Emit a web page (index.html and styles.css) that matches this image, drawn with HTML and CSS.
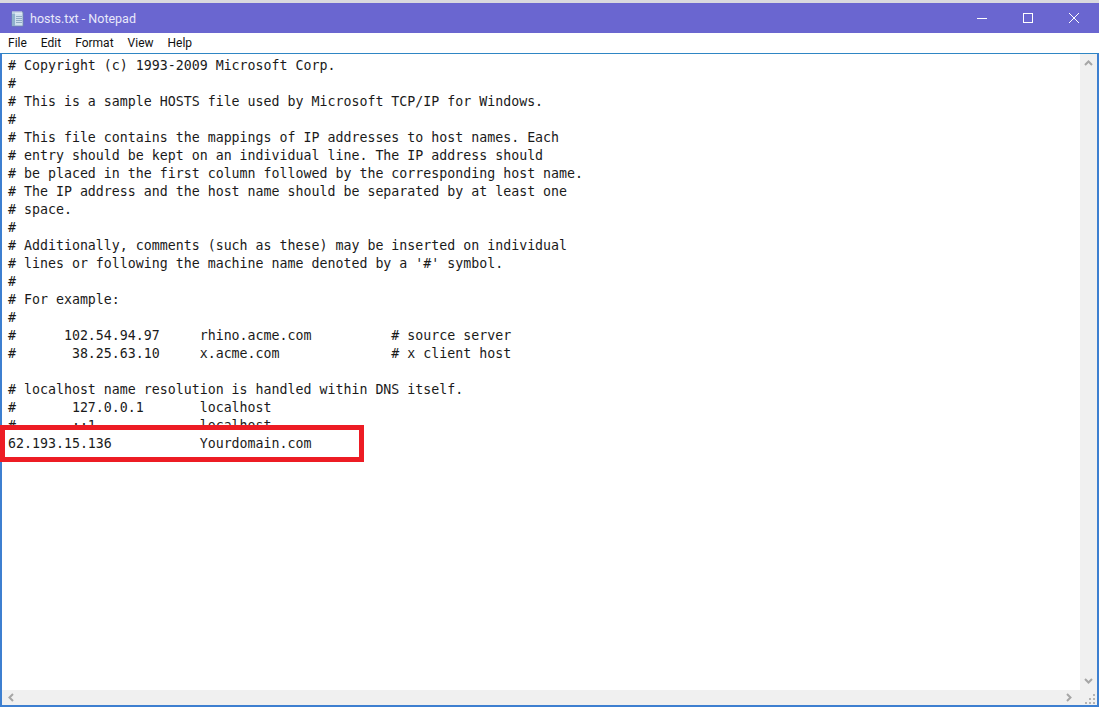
FILE: index.html
```html
<!DOCTYPE html>
<html lang="en">
<head>
<meta charset="utf-8">
<title>hosts.txt - Notepad</title>
<link rel="stylesheet" href="styles.css">
</head>
<body>
<div class="window">
  <header class="titlebar">
    <svg class="app-icon" width="16" height="17" viewBox="0 0 16 17">
      <path d="M3 2h11v14H3z" fill="#cfe0ee" stroke="#6f8ca8" stroke-width=".8"/>
      <path d="M3 2h3v14H3z" fill="#8fb2cc"/>
      <path d="M4 1v3M6 1v3M8 1v3M10 1v3M12 1v3" stroke="#f2f6fa" stroke-width=".9"/>
      <path d="M7 6.500h6M7 8.500h6M7 10.500h6M7 12.500h6" stroke="#7f9db9" stroke-width=".8"/>
    </svg>
    <span class="title">hosts.txt - Notepad</span>
    <div class="controls">
      <span class="ctl"><svg width="10" height="10" viewBox="0 0 10 10"><path d="M0 5.500h10" stroke="#fff"/></svg></span>
      <span class="ctl"><svg width="10" height="10" viewBox="0 0 10 10"><rect x=".5" y=".5" width="9" height="9" fill="none" stroke="#fff"/></svg></span>
      <span class="ctl"><svg width="10" height="10" viewBox="0 0 10 10"><path d="M0 0l10 10M10 0L0 10" stroke="#fff"/></svg></span>
    </div>
  </header>
  <nav class="menubar">
    <span>File</span><span>Edit</span><span>Format</span><span>View</span><span>Help</span>
  </nav>
  <main class="editor">
    <pre class="text"># Copyright (c) 1993-2009 Microsoft Corp.
#
# This is a sample HOSTS file used by Microsoft TCP/IP for Windows.
#
# This file contains the mappings of IP addresses to host names. Each
# entry should be kept on an individual line. The IP address should
# be placed in the first column followed by the corresponding host name.
# The IP address and the host name should be separated by at least one
# space.
#
# Additionally, comments (such as these) may be inserted on individual
# lines or following the machine name denoted by a '#' symbol.
#
# For example:
#
#      102.54.94.97     rhino.acme.com          # source server
#       38.25.63.10     x.acme.com              # x client host

# localhost name resolution is handled within DNS itself.
#       127.0.0.1       localhost
#       ::1             localhost
62.193.15.136           Yourdomain.com</pre>
    <div class="vscroll">
      <svg width="9" height="6" viewBox="0 0 9 6"><path d="M1 5l3.500-3.500L8 5" fill="none" stroke="#a6a6a6" stroke-width="2"/></svg>
      <svg width="9" height="6" viewBox="0 0 9 6"><path d="M1 1l3.500 3.500L8 1" fill="none" stroke="#a6a6a6" stroke-width="2"/></svg>
    </div>
    <div class="hscroll">
      <svg width="6" height="9" viewBox="0 0 6 9"><path d="M5 1L1.500 4.500 5 8" fill="none" stroke="#a6a6a6" stroke-width="2"/></svg>
      <svg width="6" height="9" viewBox="0 0 6 9"><path d="M1 1l3.500 3.500L1 8" fill="none" stroke="#a6a6a6" stroke-width="2"/></svg>
    </div>
    <div class="grip">
      <svg width="12" height="12" viewBox="0 0 12 12"><path d="M8 1h2v2H8zM4 5h2v2H4zM8 5h2v2H8zM0 9h2v2H0zM4 9h2v2H4zM8 9h2v2H8z" fill="#b4b4b4"/></svg>
    </div>
  </main>
  <div class="highlight"></div>
</div>
</body>
</html>
```
FILE: styles.css
```css
html, body {
  margin: 0;
  padding: 0;
  background: #fff;
  overflow: hidden;
}
.window {
  position: relative;
  width: 1099px;
  height: 707px;
  display: flex;
  flex-direction: column;
  box-sizing: border-box;
  border-top: 3px solid #d9d9de;
}
.titlebar {
  height: 30px;
  background: #6a66d0;
  display: flex;
  align-items: center;
  padding-left: 9px;
  color: #fff;
  font: 12.5px Roboto, sans-serif;
  flex: none;
}
.app-icon { margin-right: 5px; }
.title { color: #e8e8fa; }
.controls {
  margin-left: auto;
  display: flex;
  margin-right: 2px;
}
.ctl {
  width: 46px;
  height: 30px;
  display: flex;
  align-items: center;
  justify-content: center;
}
.menubar {
  height: 20px;
  background: #fff;
  display: flex;
  align-items: center;
  gap: 14px;
  padding-left: 8px;
  font: 12px Roboto, sans-serif;
  color: #111;
  flex: none;
}
.editor {
  flex: 1;
  min-height: 0;
  display: grid;
  grid-template-columns: 1fr 17px;
  grid-template-rows: 1fr 15px;
  border: 2px solid #3d7fd0;
  border-top: 1px solid #2f86c4;
}
.text {
  margin: 0;
  padding: 3px 0 0 6px;
  font: 13.28px/18px "DejaVu Sans Mono", monospace;
  color: #1a1a1a;
  overflow: hidden;
}
.vscroll {
  background: #f0f0f0;
  display: flex;
  flex-direction: column;
  justify-content: space-between;
  align-items: center;
  padding: 6px 0;
}
.hscroll {
  background: #f0f0f0;
  display: flex;
  justify-content: space-between;
  align-items: center;
  padding: 0 8px 0 6px;
}
.grip {
  background: #f0f0f0;
  display: flex;
  align-items: flex-end;
  justify-content: flex-end;
}
.highlight {
  position: absolute;
  left: 0;
  top: 422px;
  width: 364px;
  height: 37px;
  box-sizing: border-box;
  border: 5px solid #ed1c24;
  pointer-events: none;
}
```
